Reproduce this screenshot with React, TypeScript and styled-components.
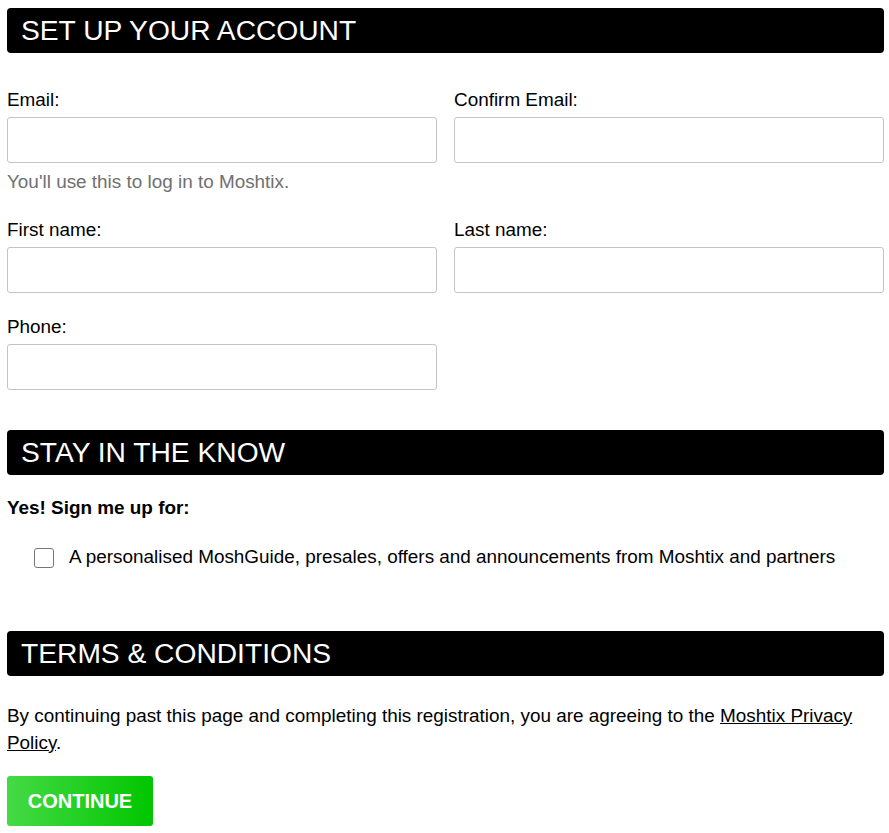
import React from "react";
import styled, { createGlobalStyle } from "styled-components";

const GlobalStyle = createGlobalStyle`
  html, body {
    margin: 0;
    padding: 0;
    background: #ffffff;
  }
  body {
    font-family: "Liberation Sans", Arial, Helvetica, sans-serif;
    color: #000000;
  }
  * { box-sizing: border-box; }
`;

const Page = styled.div`
  padding: 8px 5px 0 7px;
  font-size: 18.9px;
  line-height: 26.6px;
`;

const SectionHeader = styled.h2<{ $mt?: number }>`
  margin: ${(p) => p.$mt ?? 0}px 0 0 0;
  height: 45px;
  background: #000000;
  color: #ffffff;
  border-radius: 4px;
  font-size: 28.2px;
  font-weight: 400;
  line-height: 45px;
  padding: 0 14px;
`;

const FieldGrid = styled.div<{ $mt: number }>`
  display: grid;
  grid-template-columns: 430px 430px;
  column-gap: 17px;
  margin-top: ${(p) => p.$mt}px;
`;

const Field = styled.div`
  display: flex;
  flex-direction: column;
`;

const Label = styled.label`
  display: block;
  margin-bottom: 3.5px;
`;

const Input = styled.input`
  display: block;
  width: 100%;
  height: 46px;
  border: 1px solid #c4c4c4;
  border-radius: 3px;
  background: #ffffff;
  font: inherit;
  padding: 0 10px;
  outline: none;
`;

const Help = styled.div`
  margin-top: 6px;
  color: #707070;
`;

const Lead = styled.p`
  margin: 20px 0 0 0;
  font-weight: 700;
`;

const CheckRow = styled.label`
  display: flex;
  align-items: center;
  gap: 15px;
  margin-top: 23px;
  padding-left: 27px;
`;

const Box = styled.span`
  flex: none;
  width: 20px;
  height: 20px;
  border: 1.5px solid #767676;
  border-radius: 3px;
  background: #ffffff;
`;

const Terms = styled.p`
  margin: 27px 0 0 0;
`;

const Link = styled.a`
  color: #000000;
  text-decoration: underline;
`;

const Button = styled.button`
  display: block;
  margin-top: 20px;
  width: 146px;
  height: 50px;
  border: none;
  border-radius: 3px;
  background: linear-gradient(90deg, #45da45 0%, #00c600 100%);
  color: #ffffff;
  font-family: "Liberation Sans", Arial, sans-serif;
  font-size: 20px;
  font-weight: 700;
  padding: 0;
  cursor: pointer;
`;

export default function App() {
  return (
    <>
      <GlobalStyle />
      <Page>
        <SectionHeader>SET UP YOUR ACCOUNT</SectionHeader>

        <FieldGrid $mt={34}>
          <Field>
            <Label>Email:</Label>
            <Input type="email" />
            <Help>You'll use this to log in to Moshtix.</Help>
          </Field>
          <Field>
            <Label>Confirm Email:</Label>
            <Input type="email" />
          </Field>
        </FieldGrid>

        <FieldGrid $mt={21}>
          <Field>
            <Label>First name:</Label>
            <Input type="text" />
          </Field>
          <Field>
            <Label>Last name:</Label>
            <Input type="text" />
          </Field>
        </FieldGrid>

        <FieldGrid $mt={21}>
          <Field>
            <Label>Phone:</Label>
            <Input type="tel" />
          </Field>
        </FieldGrid>

        <SectionHeader $mt={40}>STAY IN THE KNOW</SectionHeader>
        <Lead>Yes! Sign me up for:</Lead>
        <CheckRow>
          <Box />
          <span>
            A personalised MoshGuide, presales, offers and announcements from
            Moshtix and partners
          </span>
        </CheckRow>

        <SectionHeader $mt={60}>TERMS &amp; CONDITIONS</SectionHeader>
        <Terms>
          By continuing past this page and completing this registration, you are
          agreeing to the <Link href="#">Moshtix Privacy Policy</Link>.
        </Terms>
        <Button>CONTINUE</Button>
      </Page>
    </>
  );
}
